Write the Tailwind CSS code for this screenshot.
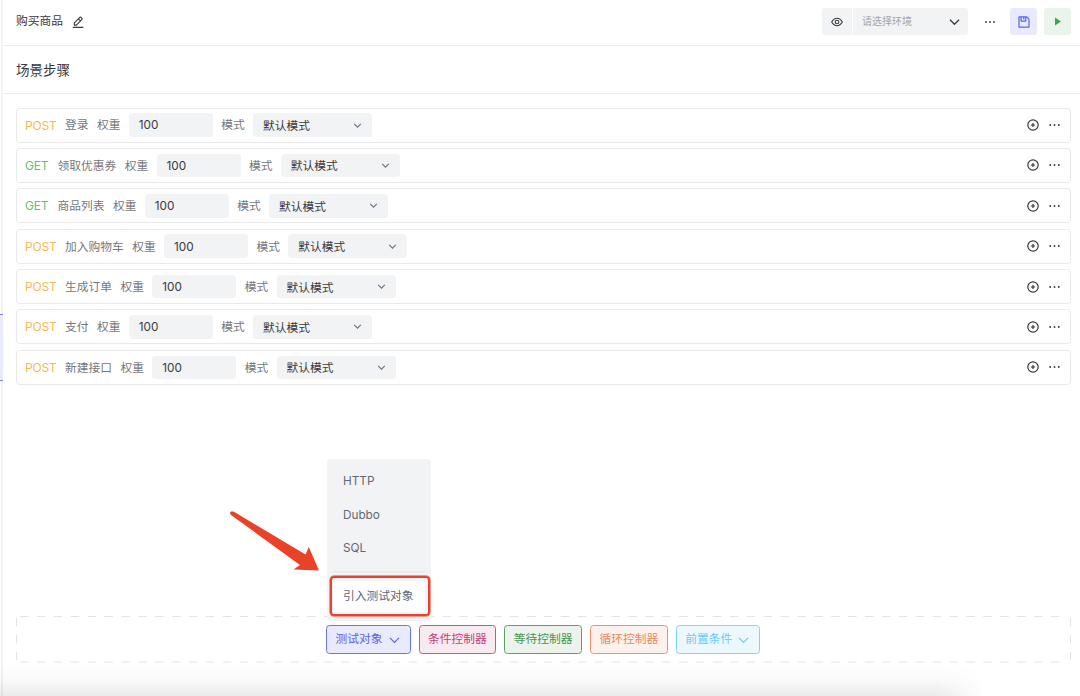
<!DOCTYPE html>
<html lang="zh-CN">
<head>
  <meta charset="UTF-8">
  <meta name="viewport" content="width=device-width, initial-scale=1.0">
  <title>购买商品</title>
  <script src="https://cdn.jsdelivr.net/npm/@tailwindcss/browser@4"></script>
</head>
<body class="bg-white font-['Inter','Noto_Sans_CJK_SC',sans-serif] text-[11.75px] text-[#39393d]">
  <div class="relative flex h-[696px] w-[1080px] overflow-hidden">
    <!-- Sidebar edge -->
    <div class="relative w-[3px] shrink-0 border-r-2 border-[#f4f4f5]">
      <div class="absolute top-[314px] left-0 h-[67px] w-[3px] border-y border-[#7d86e8] bg-[#e9eafb]"></div>
    </div>

    <main class="flex min-w-0 flex-1 flex-col">
      <!-- Header -->
      <header class="flex h-[46px] shrink-0 items-center border-b border-[#ebebec] pr-[9px] pb-[1.5px] pl-[13px]">
        <h1 class="pt-px leading-none">购买商品</h1>
        <svg class="ml-[9px] h-3 w-3" viewBox="0 0 12 12" fill="none" stroke="currentColor" stroke-width="1.15" stroke-linejoin="round">
          <path d="M2.3 9.1V6.9L7.9 1.3Q8.4.9 8.9 1.3L10 2.4Q10.4 2.9 10 3.4L4.4 9.1ZM6.4 2.8 8.5 4.9M.8 11.3H11.3" />
        </svg>
        <div class="ml-auto flex h-[27px] items-center">
          <button class="flex h-full w-[30px] items-center justify-center rounded-l-[3px] bg-[#f2f3f5]">
            <svg class="h-3 w-3" viewBox="0 0 12 12" fill="none" stroke="currentColor" stroke-width="1.1">
              <path d="M.7 6C2.1 3.6 3.8 2.3 6 2.3S9.9 3.6 11.3 6C9.9 8.4 8.2 9.7 6 9.7S2.1 8.4.7 6Z" />
              <circle cx="6" cy="6" r="1.8" />
            </svg>
          </button>
          <div class="ml-px flex h-full w-[115px] items-center justify-between rounded-r-[3px] bg-[#f2f3f5] pr-[8px] pl-[9px] text-[10px] text-[#a3a3a8]">
            <span>请选择环境</span>
            <svg class="h-[10px] w-[11px]" viewBox="0 0 11 10" fill="none" stroke="#39393d" stroke-width="1.3"><path d="M1 2.8 5.5 7.3 10 2.8" /></svg>
          </div>
          <svg class="ml-[17px] h-[10px] w-[10px]" viewBox="0 0 10 10" fill="currentColor">
            <circle cx="1" cy="5" r=".95" /><circle cx="5" cy="5" r=".95" /><circle cx="9" cy="5" r=".95" />
          </svg>
          <button class="ml-[15px] flex h-[27px] w-[27px] items-center justify-center rounded-[3px] bg-[#e9eafd]">
            <svg class="h-3 w-3" viewBox="0 0 12 12" fill="none" stroke="#5a63e8" stroke-width="1.2" stroke-linejoin="round">
              <path d="M1 .9H8.8L11 3.1V11.1H1ZM3.1 1V5.1H7.8V1M5.8 1.6V3.5" />
            </svg>
          </button>
          <button class="ml-[7px] flex h-[27px] w-[27px] items-center justify-center rounded-[3px] bg-[#eaf4eb]">
            <svg class="h-[9px] w-[6px]" viewBox="0 0 6 9" fill="#45a14d"><path d="M0 .4 6 4.5 0 8.6Z" /></svg>
          </button>
        </div>
      </header>

      <div class="flex h-12 shrink-0 items-center border-b border-[#ebebec] pt-[2px] pl-[13px]">
        <h2 class="text-[13.5px] leading-none">场景步骤</h2>
      </div>

      <!-- Steps -->
      <div id="steps" class="flex flex-col gap-[5.4px] pt-[13.5px] pr-[9px] pl-[13px]"></div>

      <!-- Footer with the controllers -->
      <footer class="relative mt-auto mr-[9px] mb-[33px] ml-[13px] flex h-[47px] shrink-0 items-center justify-start gap-[8.2px] pl-[310px]">
        <svg class="absolute inset-0 h-[47px] w-[1055px]" fill="none" stroke="#e4e4e6">
          <path d="M4 .5H1051" stroke-dasharray="8.5 8.4" />
          <path d="M4 46H1051" stroke="#f2f2f3" stroke-width="2" stroke-dasharray="8.5 8.4" />
          <path d="M.5 2V45M1054.5 2V45" stroke-dasharray="8.5 8.4" />
        </svg>
        <div class="relative">
          <button class="flex h-[29.5px] w-[84.5px] items-center justify-between rounded-[3.5px] border border-[#6b74eb] bg-[#e9eafc] pr-[10px] pl-[8.5px] text-[#5a63e8]">
            <span class="pt-px">测试对象</span>
            <svg class="h-[10px] w-[11px]" viewBox="0 0 11 10" fill="none" stroke="currentColor" stroke-width="1.2"><path d="M1 2.8 5.5 7.3 10 2.8" /></svg>
          </button>
          <!-- Dropdown -->
          <div class="absolute bottom-[33px] left-[0.5px] h-[162px] w-[104.5px] rounded-[4px] bg-[#f2f3f5] px-[6px] pt-[5px] text-[#5f6878]">
            <div class="flex h-[33.6px] items-center pt-[2px] pl-[10.5px]">HTTP</div>
            <div class="flex h-[33.6px] items-center pt-[2px] pl-[10.5px]">Dubbo</div>
            <div class="flex h-[33.6px] items-center pt-[2px] pl-[10.5px]">SQL</div>
            <div class="mt-[6px] h-[2px] bg-[#ebecef]"></div>
            <div class="mt-[8px] flex h-[31px] w-[92px] items-center rounded-[3px] bg-white pt-px pl-[10.5px]">引入测试对象</div>
          </div>
          <!-- Highlight frame and arrow -->
          <div class="absolute -top-[49px] left-[4px] h-[40px] w-[100px] rounded-[4px] border-2 border-[#ea4228] ring-[0.5px] ring-[#ea4228]"></div>
          <svg class="absolute -top-[114.5px] -left-[97px] h-[62px] w-[91px]" viewBox="0 0 91 62" fill="#ea4228">
            <path d="M2 5C-.2 2.8 1.9-.1 5 1.8L76.5 44.5 79.8 37 90 60.5 64.5 59.6 71 55Z" />
          </svg>
        </div>
        <button class="h-[29.5px] w-[77.5px] rounded-[3.5px] border border-[#c65588] bg-[#f7eaf0] pt-px text-[#c1427a]">条件控制器</button>
        <button class="h-[29.5px] w-[77.5px] rounded-[3.5px] border border-[#5da065] bg-[#ebf3ec] pt-px text-[#479450]">等待控制器</button>
        <button class="h-[29.5px] w-[77.5px] rounded-[3.5px] border border-[#e9946f] bg-[#fcf1ec] pt-px text-[#e58b63]">循环控制器</button>
        <button class="flex h-[29.5px] w-[84.5px] items-center justify-between rounded-[3.5px] border border-[#81d3fa] bg-[#edf8fe] pr-[10px] pl-[8.5px] text-[#67cbf9]">
          <span class="pt-px">前置条件</span>
          <svg class="h-[10px] w-[11px]" viewBox="0 0 11 10" fill="none" stroke="currentColor" stroke-width="1.2"><path d="M1 2.8 5.5 7.3 10 2.8" /></svg>
        </button>
      </footer>
    </main>

    <!-- Shadow at the bottom edge -->
    <div class="pointer-events-none absolute bottom-0 left-0 h-[34px] w-[985px] bg-linear-to-b from-black/0 via-black/[0.02] to-black/[0.08] mask-r-from-95%"></div>
  </div>

  <script>
    const steps = [
      { method: 'POST', name: '登录' },
      { method: 'GET', name: '领取优惠券' },
      { method: 'GET', name: '商品列表' },
      { method: 'POST', name: '加入购物车' },
      { method: 'POST', name: '生成订单' },
      { method: 'POST', name: '支付' },
      { method: 'POST', name: '新建接口' },
    ];

    const methodClasses = {
      POST: 'w-[31.5px] text-[#f3b94f]',
      GET: 'w-[24px] text-[#63bf73]',
    };

    // Render Steps
    document.getElementById('steps').innerHTML = steps.map(step => `
      <div class="flex h-[35px] shrink-0 items-center rounded-[3.5px] border border-[#e9e9eb] pr-[10px] pl-[8px] whitespace-nowrap text-[#77777b]">
        <span class="${methodClasses[step.method]} pt-px text-[12px] tracking-[-0.2px]">${step.method}</span>
        <span class="ml-[8.5px] pt-[2.5px]">${step.name}</span>
        <span class="ml-[8.5px] pt-[2.5px]">权重</span>
        <div class="ml-[8.3px] flex h-[23.5px] w-[84px] items-center rounded-[3.5px] bg-[#f2f3f5] pt-[2.5px] pl-[10px] text-[#39393d]">100</div>
        <span class="ml-[8.5px] pt-[2.5px]">模式</span>
        <div class="ml-[8.3px] flex h-[23.5px] w-[119px] items-center justify-between rounded-[3.5px] bg-[#f2f3f5] pr-[10px] pl-[10px] text-[#39393d]">
          <span class="pt-[3.5px]">默认模式</span>
          <svg class="h-[9px] w-[9px]" viewBox="0 0 9 9" fill="none" stroke="#697181" stroke-width="1.1"><path d="M1.2 2.8 4.5 6.1 7.8 2.8" /></svg>
        </div>
        <svg class="ml-auto h-3 w-3 text-[#39393d]" viewBox="0 0 12 12" fill="none" stroke="currentColor" stroke-width="1.2">
          <circle cx="6" cy="6" r="5.2" /><path d="M6 3.9V8.1M3.9 6H8.1" />
        </svg>
        <svg class="ml-[10px] h-[10px] w-[11px] text-[#39393d]" viewBox="0 0 11 10" fill="currentColor">
          <circle cx="1.2" cy="5" r=".95" /><circle cx="5.5" cy="5" r=".95" /><circle cx="9.8" cy="5" r=".95" />
        </svg>
      </div>
    `).join('');
  </script>
</body>
</html>
